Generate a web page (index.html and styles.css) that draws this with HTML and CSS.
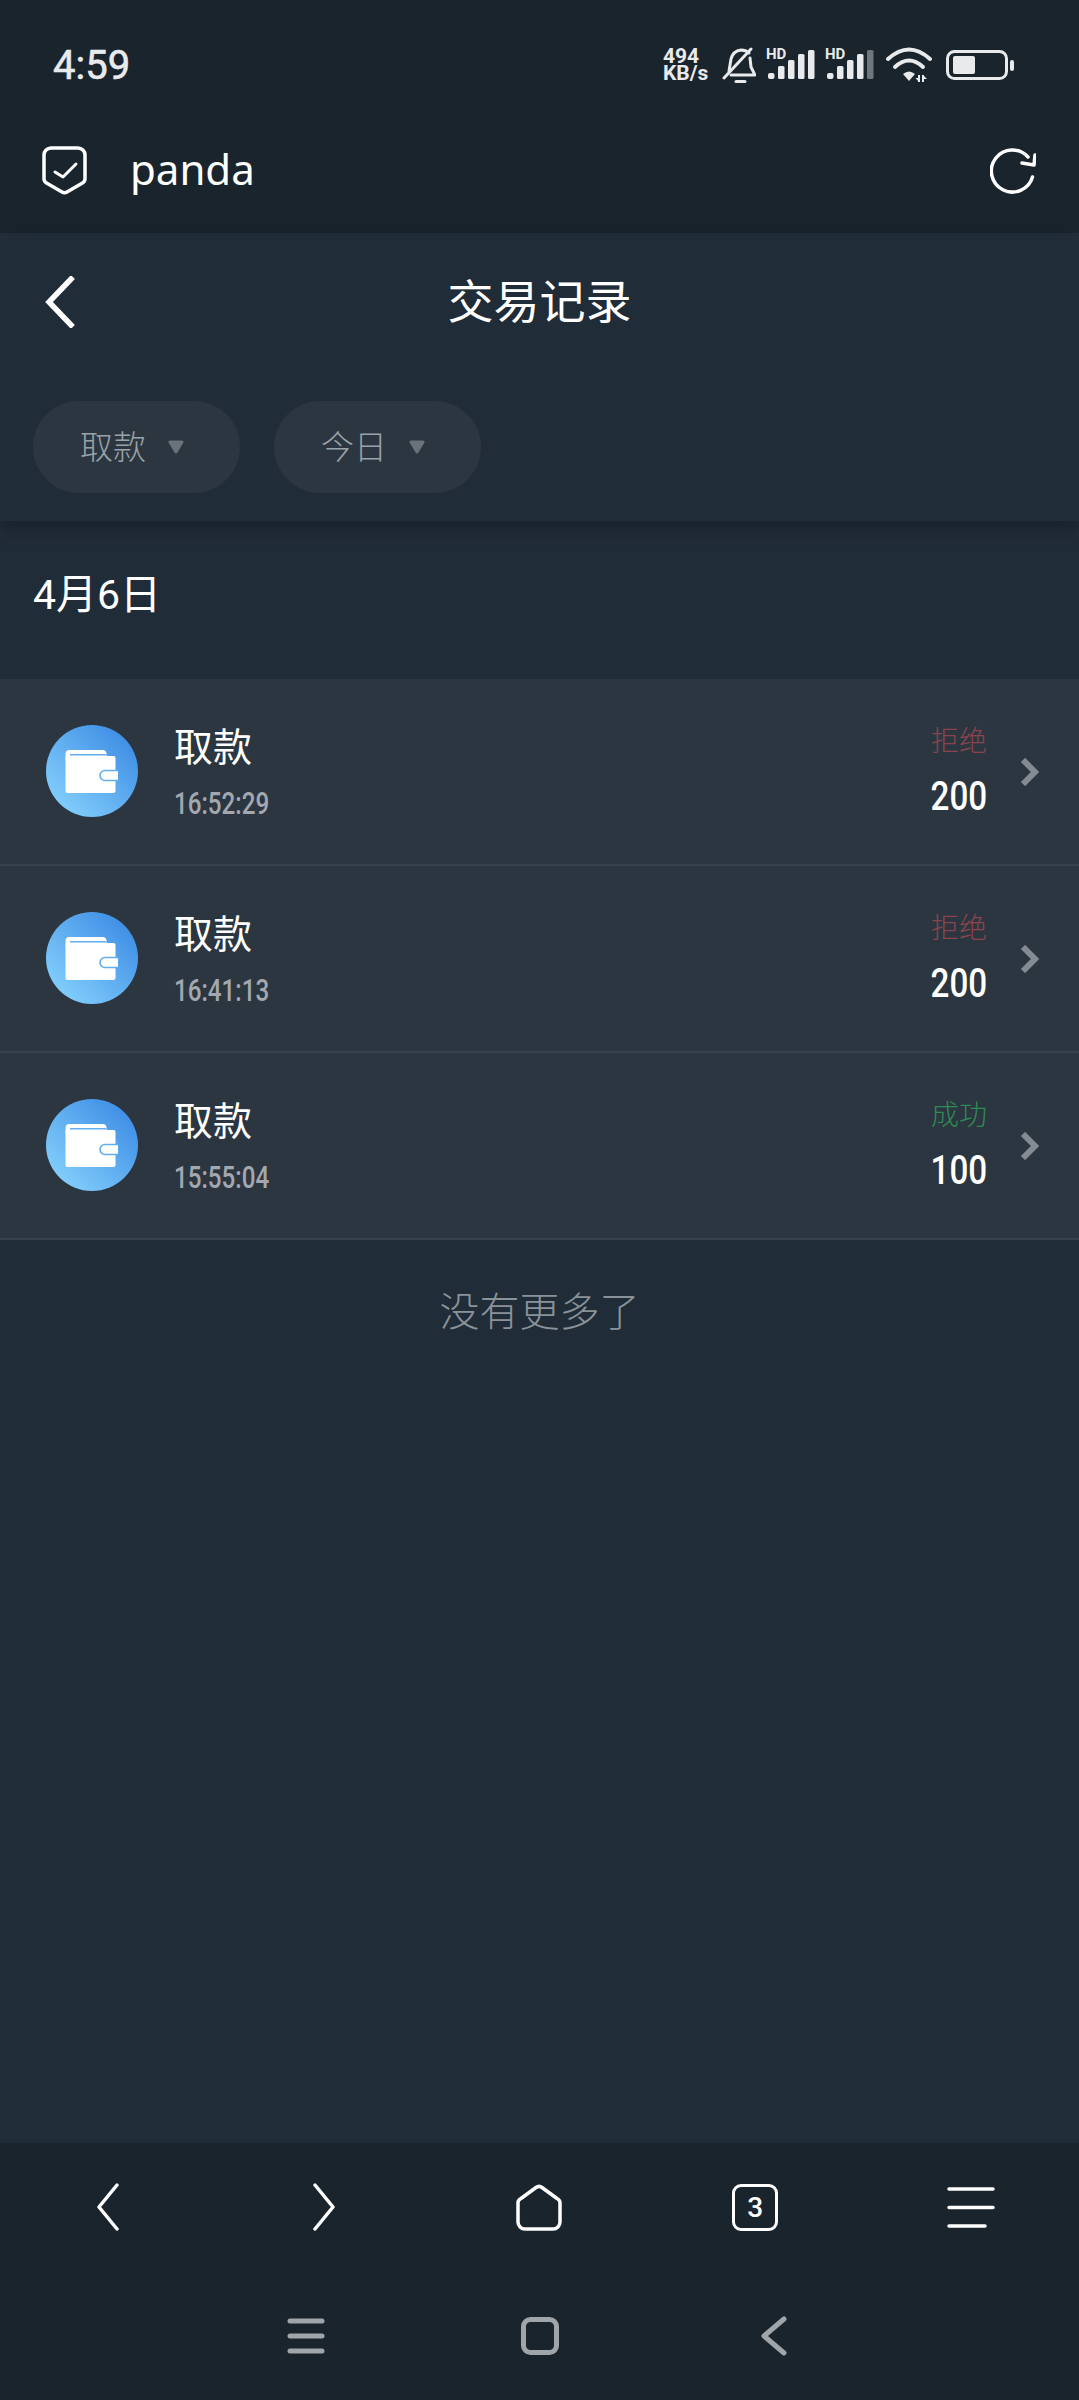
FILE: index.html
```html
<!DOCTYPE html>
<html lang="zh">

<head>
    <meta charset="UTF-8" />
    <meta name="viewport" content="width=device-width, initial-scale=1.0" />
    <title>交易记录</title>
    <link rel="stylesheet" href="styles.css">
</head>

<body>

    <svg class="defs" width="0" height="0">
        <symbol id="wallet" viewBox="0 0 92 92">
            <rect x="19.5" y="25" width="41" height="12" rx="4" fill="#fff" />
            <path d="M24 29.7H60" stroke="#62aef0" stroke-width="1.6" />
            <rect x="19.5" y="31" width="50" height="37" rx="2" fill="#fff" />
            <path d="M72 45.5H59a5 5 0 0 0 0 10H72" fill="#fff" stroke="#62aef0" stroke-width="1.6" />
        </symbol>
    </svg>

    <div class="top">
        <div class="status-bar">
            <span class="clock">4:59</span>
            <div class="status-icons">
                <div class="speed">494<br />KB/s</div>
                <svg class="bell" width="34" height="36" viewBox="0 0 34 36" fill="none" stroke="#e8eaec" stroke-width="3" stroke-linecap="round" stroke-linejoin="round">
                    <path d="M7 24L9 12Q11 4 19 3Q24 3 27 6" />
                    <path d="M28 11L29 20L33 28H9" />
                    <path d="M2 31L29 2" />
                    <path d="M14 34.5H23" />
                </svg>
                <div class="signal">
                    <span class="hd">HD</span>
                    <svg width="50" height="32" viewBox="0 0 50 32">
                        <rect x="2" y="24" width="6.500" height="6" rx="2" fill="#e8eaec" />
                        <rect x="12" y="17" width="6.500" height="13" rx="1.5" fill="#e8eaec" />
                        <rect x="22" y="11" width="6.500" height="19" rx="1.5" fill="#e8eaec" />
                        <rect x="32" y="5" width="6.500" height="25" rx="1.5" fill="#e8eaec" />
                        <rect x="42" y="1" width="6.500" height="29" rx="1.5" fill="#e8eaec" />
                    </svg>
                </div>
                <div class="signal">
                    <span class="hd">HD</span>
                    <svg width="50" height="32" viewBox="0 0 50 32">
                        <rect x="2" y="24" width="6.500" height="6" rx="2" fill="#e8eaec" />
                        <rect x="12" y="17" width="6.500" height="13" rx="1.5" fill="#e8eaec" />
                        <rect x="22" y="11" width="6.500" height="19" rx="1.5" fill="#e8eaec" />
                        <rect x="32" y="5" width="6.500" height="25" rx="1.5" fill="#e8eaec" />
                        <rect x="42" y="1" width="6.500" height="29" rx="1.5" fill="#6f777d" />
                    </svg>
                </div>
                <svg class="wifi" width="46" height="36" viewBox="0 0 46 36" fill="none" stroke="#e8eaec" stroke-width="4" stroke-linecap="round">
                    <path d="M2 12Q23 -7 44 12" />
                    <path d="M9 20Q23 7 37 20" />
                    <path d="M17 27Q23 22 29 27L23 34Z" fill="#e8eaec" stroke="none" />
                    <path d="M33 28V35M37 28V35" stroke-width="2" stroke-linecap="butt" />
                    <path d="M29.5 31L33 35L33 31ZM37 28L41 32H37Z" fill="#e8eaec" stroke="none" />
                </svg>
                <svg class="battery" width="68" height="30" viewBox="0 0 68 30">
                    <rect x="1.5" y="1.5" width="59" height="27" rx="7" fill="none" stroke="#e8eaec" stroke-width="3" />
                    <rect x="7" y="6" width="22" height="18" rx="2" fill="#e8eaec" />
                    <rect x="64" y="10" width="4" height="11" rx="2" fill="#e8eaec" />
                </svg>
            </div>
        </div>
        <div class="url-bar">
            <svg class="shield" width="46" height="50" viewBox="0 0 46 50" fill="none" stroke="#fff" stroke-width="3.5" stroke-linecap="round" stroke-linejoin="round">
                <path d="M9 2H36a7 7 0 0 1 7 7V33a5 5 0 0 1 -2.5 4L25 46a5 5 0 0 1 -5 0L4.5 37a5 5 0 0 1 -2.5 -4V9a7 7 0 0 1 7 -7Z" />
                <path d="M13 26L21 31L34 18" stroke-width="3" />
            </svg>
            <span class="site-name">panda</span>
            <svg class="refresh" width="46" height="46" viewBox="0 0 46 46" fill="none" stroke="#fff" stroke-width="3.5" stroke-linecap="round" stroke-linejoin="round">
                <path d="M42.5 29A21 21 0 1 1 38 9" />
                <path d="M45 7L44 17L32 15" />
            </svg>
        </div>
    </div>

    <div class="page-head">
        <div class="title-row">
            <svg class="back" width="30" height="52" viewBox="0 0 30 52" fill="none" stroke="#fff" stroke-width="5.5" stroke-linecap="square">
                <path d="M26 3L4 26L26 49" />
            </svg>
            <h1>交易记录</h1>
        </div>
        <div class="filters">
            <div class="pill">
                <span>取款</span>
                <svg width="16" height="14" viewBox="0 0 16 14" fill="#6a737b" stroke="#6a737b" stroke-width="3" stroke-linejoin="round"><path d="M2 2H14L8 12Z" /></svg>
            </div>
            <div class="pill">
                <span>今日</span>
                <svg width="16" height="14" viewBox="0 0 16 14" fill="#6a737b" stroke="#6a737b" stroke-width="3" stroke-linejoin="round"><path d="M2 2H14L8 12Z" /></svg>
            </div>
        </div>
    </div>

    <div class="date">4月6日</div>

    <div class="list">
        <div class="row">
            <div class="coin"><svg width="92" height="92"><use href="#wallet" /></svg></div>
            <div class="info">
                <div class="name">取款</div>
                <div class="time"><span>16:52:29</span></div>
            </div>
            <div class="result">
                <div class="state rejected">拒绝</div>
                <div class="amount"><span>200</span></div>
            </div>
            <svg class="more" width="20" height="28" viewBox="0 0 20 28" fill="none" stroke="#858b93" stroke-width="6">
                <path d="M3 2L15 14L3 26" />
            </svg>
        </div>
        <div class="row">
            <div class="coin"><svg width="92" height="92"><use href="#wallet" /></svg></div>
            <div class="info">
                <div class="name">取款</div>
                <div class="time"><span>16:41:13</span></div>
            </div>
            <div class="result">
                <div class="state rejected">拒绝</div>
                <div class="amount"><span>200</span></div>
            </div>
            <svg class="more" width="20" height="28" viewBox="0 0 20 28" fill="none" stroke="#858b93" stroke-width="6">
                <path d="M3 2L15 14L3 26" />
            </svg>
        </div>
        <div class="row">
            <div class="coin"><svg width="92" height="92"><use href="#wallet" /></svg></div>
            <div class="info">
                <div class="name">取款</div>
                <div class="time"><span>15:55:04</span></div>
            </div>
            <div class="result">
                <div class="state done">成功</div>
                <div class="amount"><span>100</span></div>
            </div>
            <svg class="more" width="20" height="28" viewBox="0 0 20 28" fill="none" stroke="#858b93" stroke-width="6">
                <path d="M3 2L15 14L3 26" />
            </svg>
        </div>
    </div>

    <div class="no-more">没有更多了</div>

    <div class="bottom">
        <div class="toolbar">
            <svg width="22" height="48" viewBox="0 0 22 48" fill="none" stroke="#fff" stroke-width="3.5" stroke-linecap="round" stroke-linejoin="round">
                <path d="M20 2L2 24L20 46" />
            </svg>
            <svg width="22" height="48" viewBox="0 0 22 48" fill="none" stroke="#fff" stroke-width="3.5" stroke-linecap="round" stroke-linejoin="round">
                <path d="M2 2L20 24L2 46" />
            </svg>
            <svg width="46" height="47" viewBox="0 0 46 47" fill="none" stroke="#fff" stroke-width="3.5" stroke-linejoin="round">
                <path d="M20 3.5a5 5 0 0 1 6 0L41 14.5a5 5 0 0 1 3 5V38a7 7 0 0 1 -7 7H9a7 7 0 0 1 -7 -7V19.5a5 5 0 0 1 3 -5Z" />
            </svg>
            <div class="tabs">3</div>
            <svg width="48" height="41" viewBox="0 0 48 41" fill="none" stroke="#fff" stroke-width="3.5" stroke-linecap="round">
                <path d="M2 2H46M2 20.500H46M2 39H38" />
            </svg>
        </div>
        <div class="sys-nav">
            <svg width="38" height="36" viewBox="0 0 38 36" fill="none" stroke="#a0a5aa" stroke-width="5" stroke-linecap="round">
                <path d="M3 3H35M3 18H35M3 33H35" />
            </svg>
            <svg width="38" height="38" viewBox="0 0 38 38" fill="none" stroke="#a0a5aa" stroke-width="5">
                <rect x="2.500" y="2.500" width="33" height="33" rx="7" />
            </svg>
            <svg width="26" height="40" viewBox="0 0 26 40" fill="none" stroke="#a0a5aa" stroke-width="5" stroke-linecap="round" stroke-linejoin="round">
                <path d="M23 3L3 20L23 37" />
            </svg>
        </div>
    </div>

</body>

</html>
```

FILE: styles.css
```css
body {
    margin: 0;
    width: 1079px;
    height: 2400px;
    display: flex;
    flex-direction: column;
    background: #202c38;
    color: #fff;
    font-family: Roboto, "Noto Sans CJK SC", sans-serif;
    overflow: hidden;
}

.defs {
    position: absolute;
}

/* top system bar + browser url bar */
.top {
    height: 233px;
    background: #1a242c;
}

.status-bar {
    height: 86px;
    padding: 22px 65px 0 53px;
    display: flex;
    justify-content: space-between;
    align-items: center;
}

.clock {
    font-size: 40px;
    font-weight: 400;
    -webkit-text-stroke: 0.6px #e8eaec;
    color: #e8eaec;
}

.status-icons {
    display: flex;
    align-items: center;
}

.speed {
    width: 48px;
    font-size: 21px;
    line-height: 17px;
    font-weight: 700;
    white-space: nowrap;
    color: #e8eaec;
    margin-right: 11px;
}

.bell {
    margin-right: 10px;
}

.signal {
    position: relative;
    width: 50px;
    height: 32px;
    margin-right: 9px;
}

.hd {
    position: absolute;
    left: 0;
    top: -3px;
    font-size: 15px;
    line-height: 16px;
    font-weight: 700;
    color: #e8eaec;
}

.wifi {
    margin: 0 14px 0 2px;
}

.url-bar {
    height: 125px;
    padding: 0 43px 0 42px;
    display: flex;
    align-items: center;
}

.site-name {
    margin: 0 0 5px 42px;
    font-family: "Noto Sans", sans-serif;
    font-size: 42px;
    font-weight: 400;
    flex-grow: 1;
}

/* page header */
.page-head {
    position: relative;
    background: #202c38;
    box-shadow: 0 8px 16px rgba(0, 0, 0, 0.25);
    height: 288px;
}

.title-row {
    position: relative;
    height: 138px;
    box-sizing: border-box;
    padding-bottom: 8px;
    display: flex;
    align-items: center;
    justify-content: center;
}

.title-row h1 {
    margin: 0;
    font-size: 46px;
    font-weight: 400;
}

.back {
    position: absolute;
    left: 45px;
    top: 43px;
}

.filters {
    padding: 30px 0 0 33px;
    display: flex;
    gap: 34px;
}

.pill {
    width: 207px;
    height: 92px;
    box-sizing: border-box;
    padding-left: 47px;
    border-radius: 46px;
    background: #2c3640;
    display: flex;
    align-items: center;
    gap: 22px;
    font-size: 33px;
    font-weight: 300;
    color: #9aa2a9;
}

.pill span {
    margin-bottom: 5px;
}

/* list */
.date {
    height: 140px;
    padding: 0 0 18px 33px;
    display: flex;
    align-items: center;
    font-size: 41px;
}

.list {
    background: #2c3640;
}

.row {
    height: 185px;
    padding-left: 46px;
    border-bottom: 2px solid #37424c;
    display: flex;
    align-items: center;
}

.coin {
    width: 92px;
    height: 92px;
    margin-bottom: 2px;
    border-radius: 50%;
    background: linear-gradient(45deg, #84d0fd 10%, #3d8ce4 90%);
}

.info {
    margin: 0 0 2px 36px;
    flex-grow: 1;
}

.name {
    font-size: 39px;
    line-height: 50px;
    margin-bottom: 16px;
}

/* condensed digits, no narrow family installed */
.time span {
    display: inline-block;
    font-size: 31px;
    line-height: 30px;
    font-weight: 500;
    color: #a3a8b0;
    transform: scaleX(0.78);
    transform-origin: left center;
}

.result {
    text-align: right;
    margin: 0 33px 0 0;
}

.state {
    font-size: 28px;
    line-height: 36px;
    font-weight: 300;
    margin-bottom: 15px;
}

.rejected {
    color: #8a444e;
}

.done {
    color: #2f8a55;
}

.amount span {
    display: inline-block;
    font-size: 40px;
    line-height: 44px;
    font-weight: 500;
    transform: scaleX(0.83);
    transform-origin: right center;
}

.more {
    margin-right: 39px;
}

.no-more {
    height: 138px;
    display: flex;
    align-items: center;
    justify-content: center;
    font-size: 40px;
    font-weight: 300;
    color: #8a9299;
}

/* bottom browser toolbar + system nav */
.bottom {
    margin-top: auto;
    height: 257px;
    background: #1a242c;
}

.toolbar {
    height: 128px;
    display: grid;
    grid-template-columns: repeat(5, 1fr);
    justify-items: center;
    align-items: center;
}

.tabs {
    width: 46px;
    height: 47px;
    box-sizing: border-box;
    border: 3.500px solid #fff;
    border-radius: 9px;
    display: flex;
    align-items: center;
    justify-content: center;
    font-size: 28px;
    font-weight: 500;
}

.sys-nav {
    height: 129px;
    display: grid;
    grid-template-columns: repeat(3, 234px);
    justify-content: center;
    justify-items: center;
    align-items: center;
}
```
